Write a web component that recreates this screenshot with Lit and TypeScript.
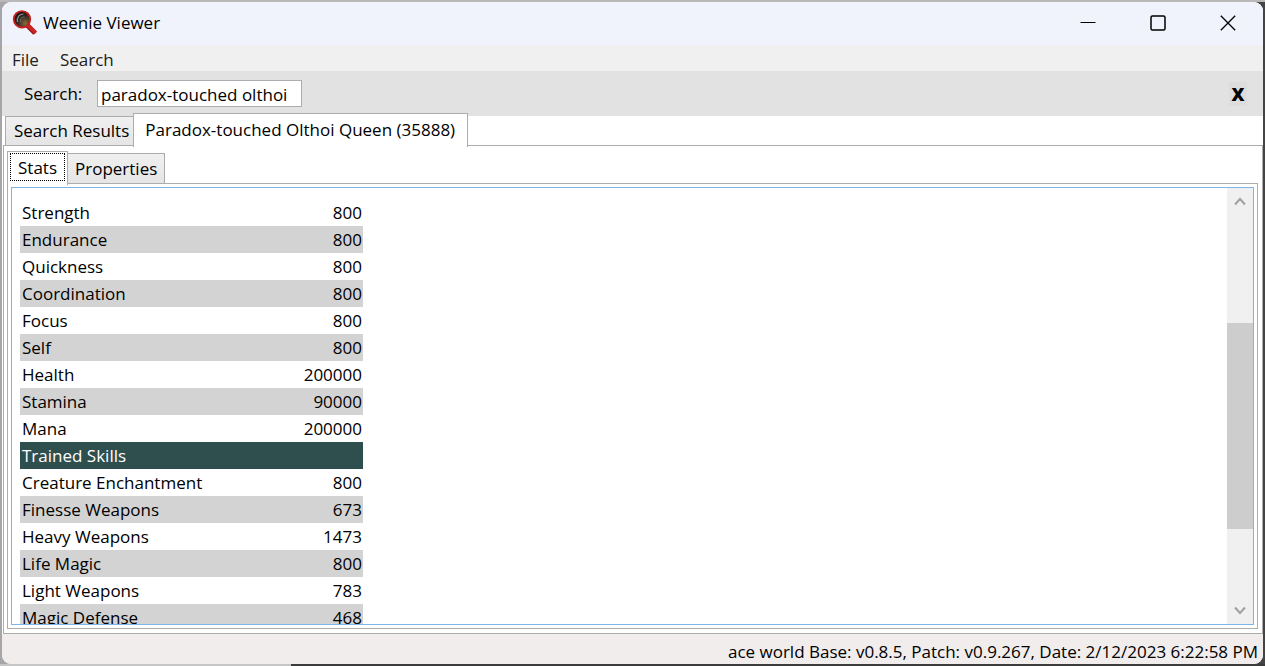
import { LitElement, html, css, svg } from "lit";
import { customElement, state } from "lit/decorators.js";

interface StatRow {
  name: string;
  value?: number;
}

const ROWS: StatRow[] = [
  { name: "Strength", value: 800 },
  { name: "Endurance", value: 800 },
  { name: "Quickness", value: 800 },
  { name: "Coordination", value: 800 },
  { name: "Focus", value: 800 },
  { name: "Self", value: 800 },
  { name: "Health", value: 200000 },
  { name: "Stamina", value: 90000 },
  { name: "Mana", value: 200000 },
  { name: "Trained Skills" },
  { name: "Creature Enchantment", value: 800 },
  { name: "Finesse Weapons", value: 673 },
  { name: "Heavy Weapons", value: 1473 },
  { name: "Life Magic", value: 800 },
  { name: "Light Weapons", value: 783 },
  { name: "Magic Defense", value: 468 },
];

const logo = svg`
  <defs>
    <radialGradient id="lens" cx="0.7" cy="0.75" r="0.8">
      <stop offset="0" stop-color="#8a6a3a" />
      <stop offset="0.5" stop-color="#3a3026" />
      <stop offset="1" stop-color="#0c0c0c" />
    </radialGradient>
  </defs>
  <path d="M15.5 15.5 L23 23" stroke="#8d1717" stroke-width="5" />
  <path d="M15.5 15 L23.8 23" stroke="#cf2424" stroke-width="3.4" />
  <circle cx="10" cy="9.3" r="8.2" fill="url(#lens)" stroke="#c42020" stroke-width="1.9" />
  <path d="M5.5 12 C4.5 7 7.5 4 11.5 4" fill="none" stroke="#8d9296" stroke-width="1.2" />
  <path d="M8.5 12 C7.5 9 9.5 7 12.5 7" fill="none" stroke="#6b6d6c" stroke-width="1" />`;

@customElement("stats-table")
export class StatsTable extends LitElement {
  static styles = css`
    :host {
      display: block;
    }
    .table {
      width: 343px;
      border-collapse: collapse;
      table-layout: fixed;
    }
    .row {
      height: 27px;
    }
    .row:nth-child(even) {
      background: #d3d3d3;
    }
    .row.heading {
      background: #2f4f4f;
      color: #fff;
    }
    .name,
    .value {
      padding: 0 1px 0 2px;
      font-weight: 400;
      line-height: 27px;
      text-align: left;
    }
    .value {
      width: 90px;
      text-align: right;
    }
  `;

  render() {
    return html`<table class="table">
      <tbody>
        ${ROWS.map((r) =>
          r.value === undefined
            ? html`<tr class="row heading"><th class="name" colspan="2">${r.name}</th></tr>`
            : html`<tr class="row"><th class="name" scope="row">${r.name}</th><td class="value">${r.value}</td></tr>`
        )}
      </tbody>
    </table>`;
  }
}

@customElement("app-root")
export class AppRoot extends LitElement {
  @state() private query = "paradox-touched olthoi";
  @state() private thumb = { before: 108, size: 207, after: 68 };

  static styles = css`
    :host {
      display: block;
      height: 100vh;
      box-sizing: border-box;
      padding: 2px;
      background:
        linear-gradient(90deg, #c6c6c6 23%, #3c3c3c 23%) bottom / 100% 2px no-repeat,
        linear-gradient(#b9b9b9, #b9b9b9) top / 100% 2px no-repeat,
        linear-gradient(90deg, #a6a6a8 50%, #444 50%);
      color: #000;
      font: 17px/24px "Open Sans", "Noto Sans", sans-serif;
    }
    button,
    input {
      font: inherit;
      color: inherit;
      margin: 0;
      box-sizing: border-box;
    }
    svg {
      display: block;
    }
    .window {
      height: 100%;
      display: flex;
      flex-direction: column;
      overflow: hidden;
      border-radius: 9px;
      background: #fff;
    }
    .titlebar {
      display: flex;
      align-items: center;
      height: 43px;
      flex: none;
      padding-left: 10px;
      background: #f0f3fb;
    }
    .title {
      flex: 1;
      padding: 0 0 2px 6px;
      margin: 0;
      font-size: 17px;
      font-weight: 400;
    }
    .logo,
    .caption {
      padding: 0 0 2px;
    }
    .caption {
      display: grid;
      place-items: center;
      width: 70px;
      height: 43px;
      border: 0;
      background: none;
    }
    .menubar {
      display: flex;
      height: 26px;
      flex: none;
      gap: 21px;
      padding-left: 10px;
      background: #f0f0f0;
    }
    .menu {
      padding: 3px 0 0;
      border: 0;
      background: none;
      color: #212121;
    }
    .searchbar {
      display: flex;
      align-items: center;
      height: 45px;
      flex: none;
      padding: 0 16px 0 22px;
      background: #e2e2e2;
    }
    .label {
      flex: none;
      width: 73px;
      padding-top: 1px;
    }
    .query {
      width: 205px;
      height: 27px;
      padding: 1px 3px 0;
      border: 1px solid #abadb3;
      border-radius: 0;
      background: #fff;
      outline: none;
    }
    .clear {
      display: grid;
      place-items: center;
      width: 18px;
      height: 24px;
      margin-left: auto;
      padding: 0;
      border: 0;
      background: #dddddd;
      font-size: 18px;
      font-weight: 800;
    }
    .tabs {
      display: flex;
      align-items: flex-end;
      flex: none;
      position: relative;
      z-index: 1;
    }
    .tab {
      border: 1px solid #acacac;
      height: 30px;
      background: linear-gradient(#f0f0f0, #e5e5e5);
      white-space: nowrap;
      outline: none;
    }
    .tab.active {
      height: 34px;
      margin-bottom: -1px;
      border-bottom: 0;
      background: #fff;
    }
    .outer {
      margin-top: -3px;
      padding-left: 3px;
    }
    .outer .tab {
      padding: 0 4px 0 8px;
    }
    .outer .tab.active {
      margin-left: -1px;
      padding: 0 12px 1px 11px;
    }
    .inner {
      padding-left: 3px;
      margin-top: 5px;
    }
    .inner .tab {
      height: 31px;
      padding: 0 7px;
    }
    .inner .tab.active {
      height: 34px;
      padding: 0 2px 3px;
    }
    .inner .tab + .tab {
      border-left: 0;
    }
    .focus {
      display: block;
      height: 28px;
      box-sizing: border-box;
      padding: 0 7px;
      border: 1px dotted #000;
      line-height: 27px;
    }
    .page {
      display: flex;
      flex-direction: column;
      flex: 1;
      min-height: 0;
      margin: -1px 0 0 1px;
      border: 1px solid #acacac;
    }
    .panel {
      display: flex;
      flex: 1;
      min-height: 0;
      margin: -1px 4px 4px 3px;
      padding: 3px;
      border: 1px solid #acacac;
    }
    .list {
      display: flex;
      flex: 1;
      min-height: 0;
      border: 1px solid #7eb4ea;
    }
    .viewport {
      flex: 1;
      min-width: 0;
      overflow: hidden;
      padding: 11px 8px 0;
    }
    .scroll {
      display: flex;
      flex-direction: column;
      width: 26px;
      flex: none;
      background: #f0f0f0;
    }
    .arrow {
      display: grid;
      place-items: center;
      height: 27px;
      padding: 0;
      border: 0;
      background: none;
    }
    .track {
      display: flex;
      flex-direction: column;
      flex: 1;
      min-height: 0;
    }
    .thumb {
      background: #cdcdcd;
    }
    .status {
      flex: none;
      height: 30px;
      padding: 6px 5px 0;
      box-sizing: border-box;
      background: #f1edec;
      text-align: right;
      white-space: nowrap;
    }
  `;

  private onInput(e: Event) {
    this.query = (e.target as HTMLInputElement).value;
  }

  render() {
    const { before, size, after } = this.thumb;
    return html`
      <div class="window">
        <header class="titlebar">
          <svg class="logo" width="25" height="25" viewBox="0 0 25 25" aria-hidden="true">${logo}</svg>
          <h1 class="title">Weenie Viewer</h1>
          <button class="caption" aria-label="Minimize">
            <svg width="16" height="16" viewBox="0 0 16 16"><path d="M0.5 7.5H15.5" stroke="#000" /></svg>
          </button>
          <button class="caption" aria-label="Maximize">
            <svg width="16" height="16" viewBox="0 0 16 16">
              <rect x="1" y="1" width="14" height="14" rx="1.5" fill="none" stroke="#000" stroke-width="1.5" />
            </svg>
          </button>
          <button class="caption" aria-label="Close">
            <svg width="16" height="16" viewBox="0 0 16 16">
              <path d="M0.8 0.8L15.2 15.2M15.2 0.8L0.8 15.2" stroke="#000" stroke-width="1.3" />
            </svg>
          </button>
        </header>
        <nav class="menubar">
          <button class="menu">File</button>
          <button class="menu">Search</button>
        </nav>
        <div class="searchbar">
          <label class="label" for="query">Search:</label>
          <input class="query" id="query" type="text" .value=${this.query} @input=${this.onInput} />
          <button class="clear" aria-label="Close search">X</button>
        </div>
        <div class="tabs outer" role="tablist">
          <button class="tab" role="tab">Search Results</button>
          <button class="tab active" role="tab" aria-selected="true">Paradox-touched Olthoi Queen (35888)</button>
        </div>
        <main class="page">
          <div class="tabs inner" role="tablist">
            <button class="tab active" role="tab" aria-selected="true"><span class="focus">Stats</span></button>
            <button class="tab" role="tab">Properties</button>
          </div>
          <section class="panel">
            <div class="list">
              <div class="viewport"><stats-table></stats-table></div>
              <div class="scroll">
                <button class="arrow" aria-label="Scroll up">
                  <svg width="12" height="9" viewBox="0 0 12 9"><path d="M1 7.5L6 2L11 7.5" fill="none" stroke="#a0a0a0" stroke-width="2" /></svg>
                </button>
                <div class="track">
                  <div style="flex:${before}"></div>
                  <div class="thumb" style="flex:${size}"></div>
                  <div style="flex:${after}"></div>
                </div>
                <button class="arrow" aria-label="Scroll down">
                  <svg width="12" height="9" viewBox="0 0 12 9"><path d="M1 1.5L6 7L11 1.5" fill="none" stroke="#a0a0a0" stroke-width="2" /></svg>
                </button>
              </div>
            </div>
          </section>
        </main>
        <footer class="status">ace world Base: v0.8.5, Patch: v0.9.267, Date: 2/12/2023 6:22:58 PM</footer>
      </div>
    `;
  }
}
